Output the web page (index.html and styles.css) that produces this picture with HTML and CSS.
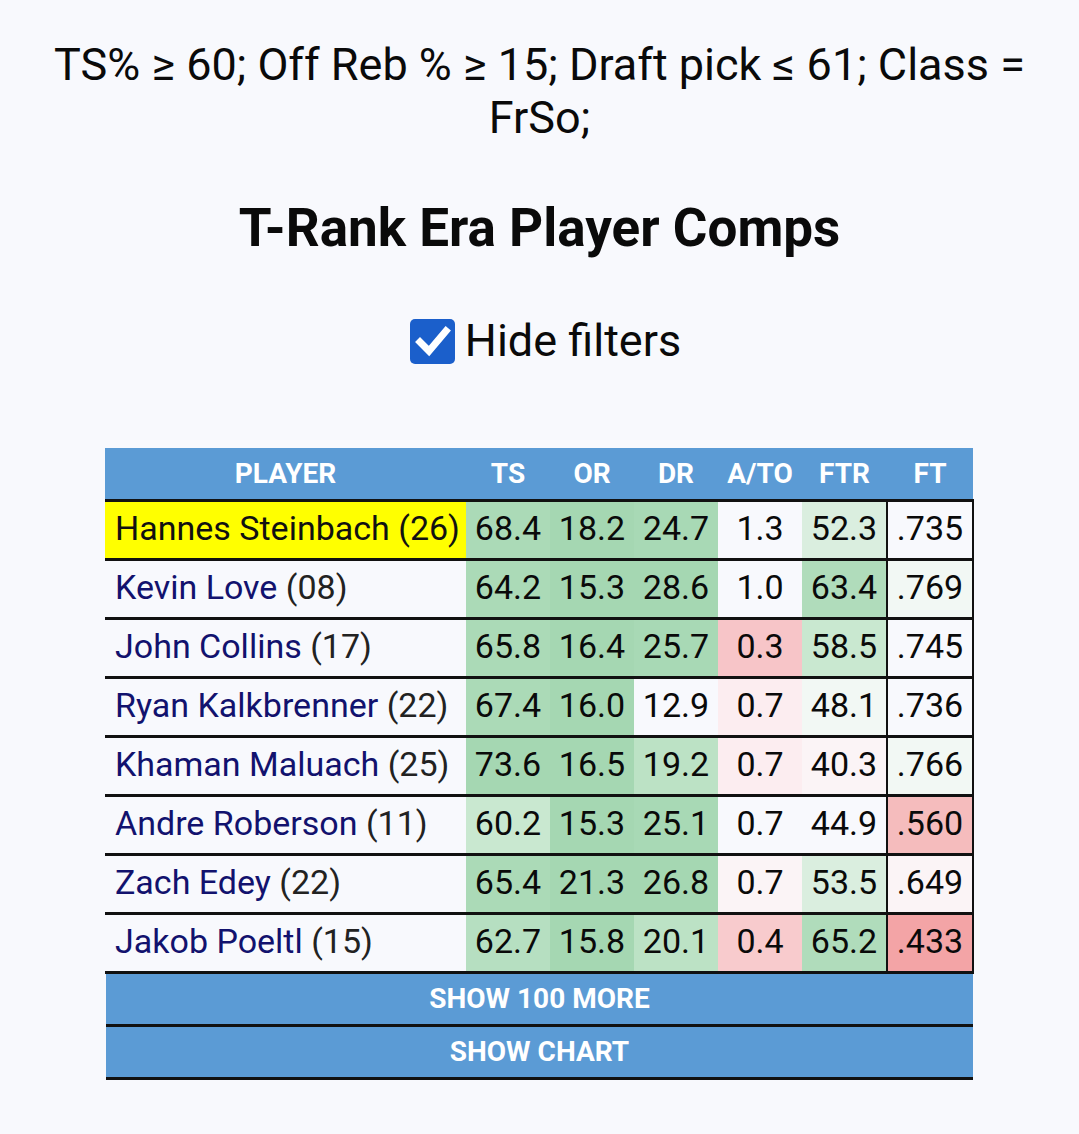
FILE: index.html
```html
<!DOCTYPE html>
<html>
<head>
<meta charset="utf-8">
<link rel="stylesheet" href="styles.css">
</head>
<body>
<p class="filters">TS% ≥ 60; Off Reb % ≥ 15; Draft pick ≤ 61; Class = FrSo;</p>
<h1 class="title">T-Rank Era Player Comps</h1>
<div class="hide-row">
  <label class="hide">
    <span class="box"><svg viewBox="0 0 45 45" width="45" height="45"><path d="M10 23 L19 32 L36 12" fill="none" stroke="#fff" stroke-width="7" stroke-linecap="square"/></svg></span>
    <span>Hide filters</span>
  </label>
</div>
<table class="comps">
  <colgroup>
    <col class="c-player"><col class="c-n"><col class="c-n"><col class="c-n"><col class="c-n"><col class="c-n2"><col class="c-ft">
  </colgroup>
  <thead>
    <tr><th>PLAYER</th><th>TS</th><th>OR</th><th>DR</th><th>A/TO</th><th>FTR</th><th>FT</th></tr>
  </thead>
  <tbody>
    <tr class="self">
      <td class="name">Hannes Steinbach (26)</td>
      <td class="g2">68.4</td><td class="g1">18.2</td><td class="g1b">24.7</td><td>1.3</td><td class="g4">52.3</td><td class="ft">.735</td>
    </tr>
    <tr>
      <td class="name"><a>Kevin Love</a> (08)</td>
      <td class="g2">64.2</td><td class="g1">15.3</td><td class="g1">28.6</td><td>1.0</td><td class="g2b">63.4</td><td class="ft g6">.769</td>
    </tr>
    <tr>
      <td class="name"><a>John Collins</a> (17)</td>
      <td class="g2">65.8</td><td class="g1">16.4</td><td class="g1b">25.7</td><td class="r2">0.3</td><td class="g3">58.5</td><td class="ft">.745</td>
    </tr>
    <tr>
      <td class="name"><a>Ryan Kalkbrenner</a> (22)</td>
      <td class="g2">67.4</td><td class="g1">16.0</td><td>12.9</td><td class="r5">0.7</td><td class="g6">48.1</td><td class="ft">.736</td>
    </tr>
    <tr>
      <td class="name"><a>Khaman Maluach</a> (25)</td>
      <td class="g1">73.6</td><td class="g1">16.5</td><td class="g3b">19.2</td><td class="r5">0.7</td><td class="r6">40.3</td><td class="ft g6">.766</td>
    </tr>
    <tr>
      <td class="name"><a>Andre Roberson</a> (11)</td>
      <td class="g3">60.2</td><td class="g1">15.3</td><td class="g1b">25.1</td><td>0.7</td><td>44.9</td><td class="ft r3">.560</td>
    </tr>
    <tr>
      <td class="name"><a>Zach Edey</a> (22)</td>
      <td class="g2">65.4</td><td class="g1">21.3</td><td class="g1">26.8</td><td class="r6">0.7</td><td class="g4">53.5</td><td class="ft r6">.649</td>
    </tr>
    <tr>
      <td class="name"><a>Jakob Poeltl</a> (15)</td>
      <td class="g2c">62.7</td><td class="g1">15.8</td><td class="g3b">20.1</td><td class="r4">0.4</td><td class="g2b">65.2</td><td class="ft r1">.433</td>
    </tr>
  </tbody>
</table>
<div class="btns">
  <div class="btn">SHOW 100 MORE</div>
  <div class="btn">SHOW CHART</div>
</div>
</body>
</html>
```
FILE: styles.css
```css
html, body {
  margin: 0;
  padding: 0;
  background: #f8f9fd;
}
body {
  font-family: Roboto, "Noto Sans", sans-serif;
  color: #0a0a0a;
}
.filters {
  margin: 38px auto 0;
  width: 1000px;
  text-align: center;
  font-size: 45px;
  line-height: 53px;
}
.title {
  margin: 54px 0 0;
  text-align: center;
  font-size: 53px;
  line-height: 60px;
  font-weight: 700;
}
.hide-row {
  margin-top: 55px;
  padding-left: 12px;
  display: flex;
  justify-content: center;
}
.hide {
  display: flex;
  align-items: center;
  gap: 10px;
  font-size: 45px;
  line-height: 56px;
}
.box {
  width: 45px;
  height: 45px;
  border-radius: 5px;
  background: #1b5fcb;
  display: flex;
}
.comps {
  margin: 79px auto 0;
  width: 867px;
  border-collapse: collapse;
  table-layout: fixed;
  font-size: 34px;
}
.c-player { width: 361px; }
.c-n { width: 84px; }
.c-n2 { width: 85px; }
.c-ft { width: 86px; }
.comps th {
  background: #5b9bd5;
  color: #fff;
  font-size: 28px;
  font-weight: 700;
  height: 51px;
  padding: 0;
  text-align: center;
  border-bottom: 3px solid #111;
}
.comps td {
  height: 52px;
  padding: 0 0 4px;
  text-align: center;
  border-bottom: 3px solid #111;
  white-space: nowrap;
}
.comps td.name {
  text-align: left;
  padding-left: 10px;
  color: #222;
}
.name a { color: #12126e; }
.self td.name { background: #ffff00; color: #111; }
.comps td.ft {
  border-left: 2px solid #111;
  border-right: 2px solid #111;
}
.g1 { background: #a5d7b2; }
.g1b { background: #a8d9b5; }
.g2 { background: #abdab7; }
.g2b { background: #b0dcbb; }
.g2c { background: #b6dfc1; }
.g3 { background: #c9e8d0; }
.g3b { background: #bce2c5; }
.g4 { background: #daeedf; }
.g6 { background: #f2f8f4; }
.r1 { background: #f3a4a6; }
.r2 { background: #f7c5c8; }
.r3 { background: #f5bcbd; }
.r4 { background: #f8cbcd; }
.r5 { background: #fcedf0; }
.r6 { background: #fbf4f6; }
.btns {
  width: 867px;
  margin: 0 auto;
}
.btn {
  background: #5b9bd5;
  color: #fff;
  font-weight: 700;
  font-size: 28px;
  text-align: center;
  height: 50px;
  line-height: 50px;
  border-bottom: 3px solid #111;
}
```
